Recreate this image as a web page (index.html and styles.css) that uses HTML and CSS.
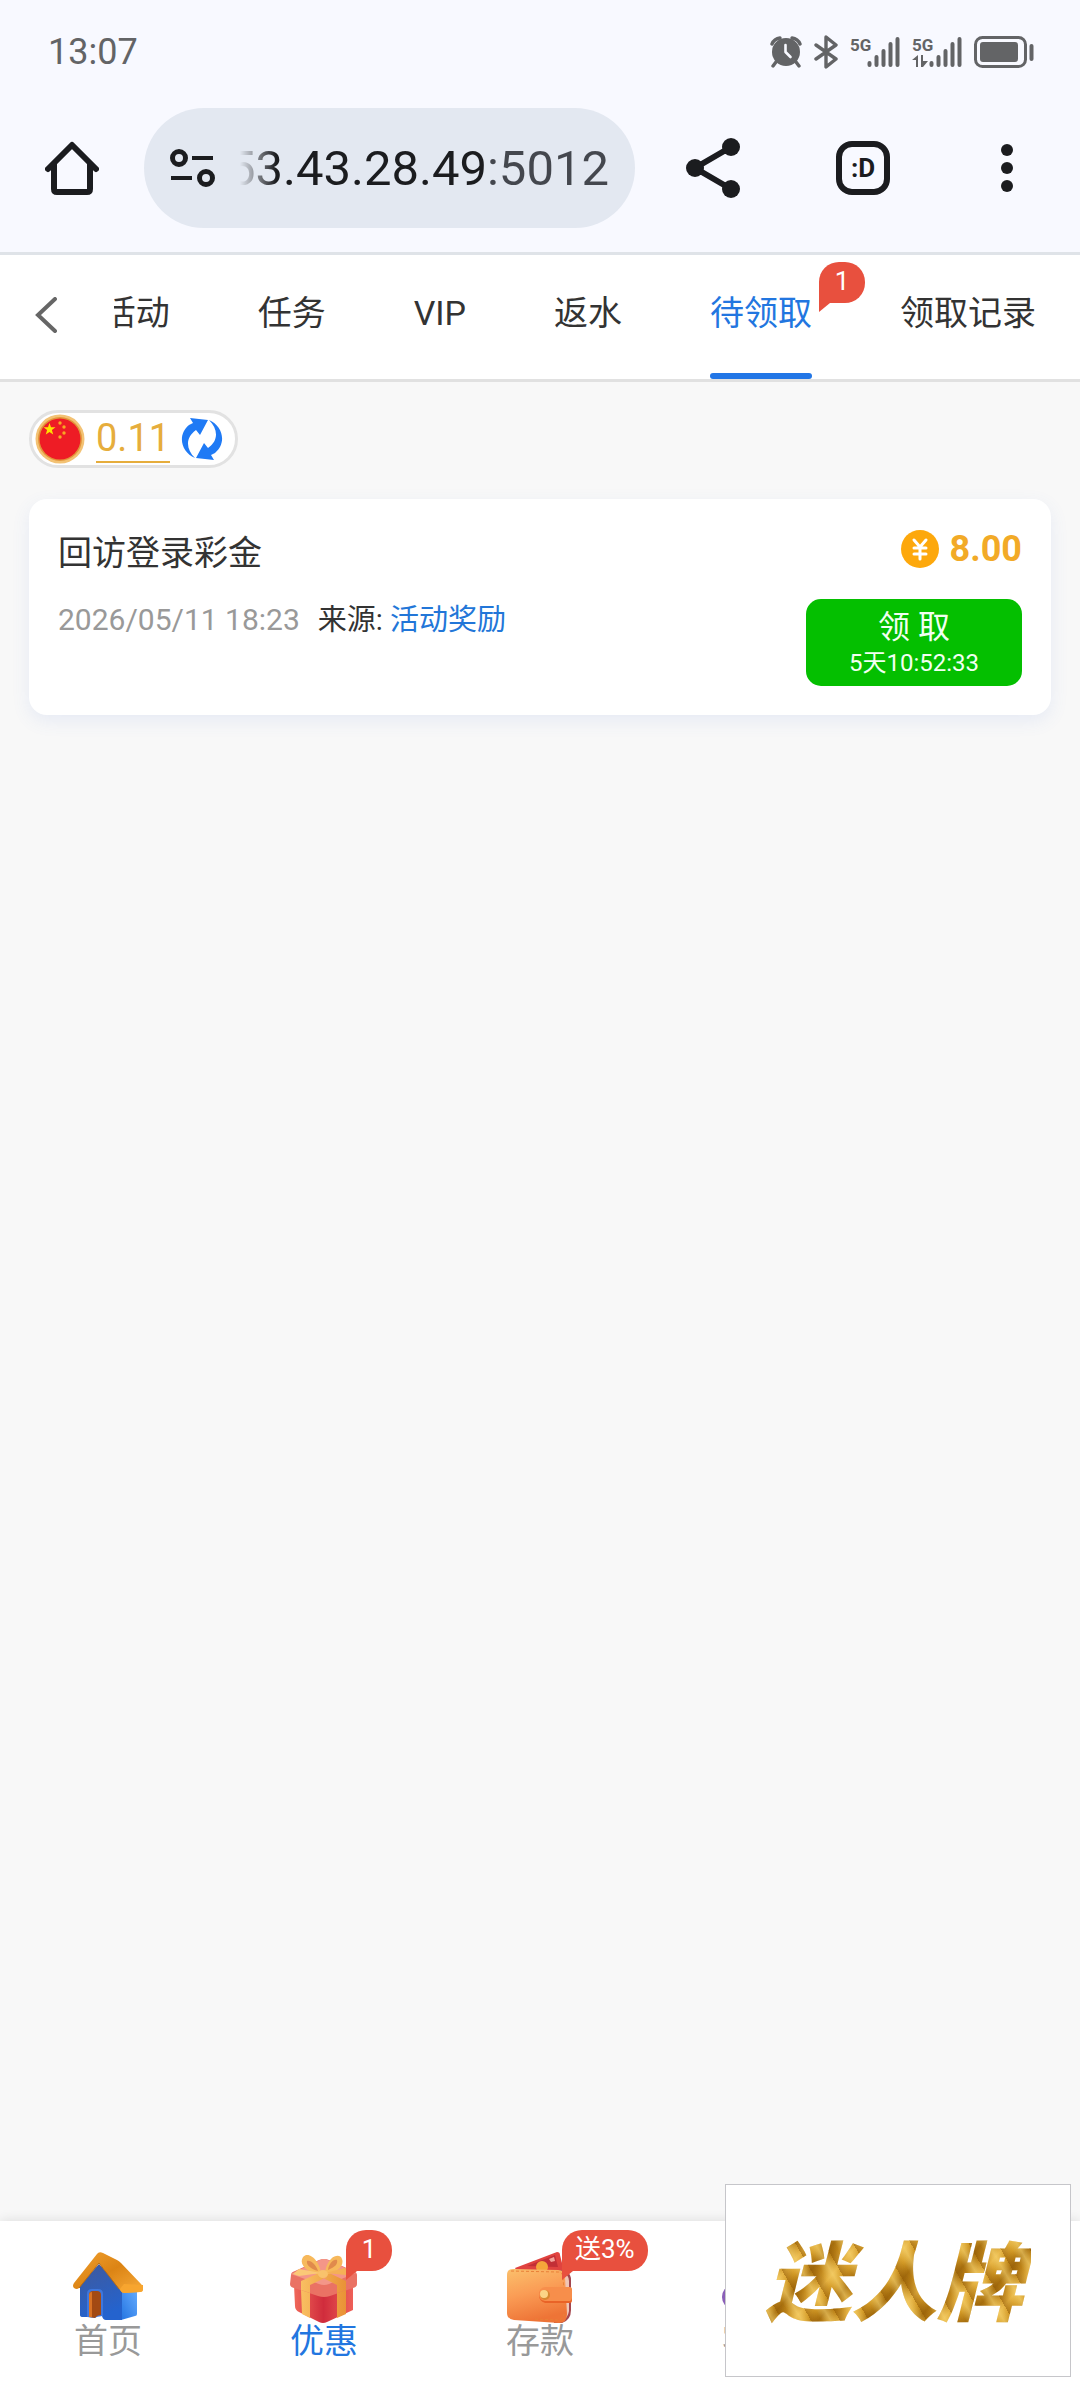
FILE: index.html
```html
<!DOCTYPE html>
<html lang="zh-CN">
<head>
    <meta charset="UTF-8">
    <meta name="viewport" content="width=device-width, initial-scale=1.0">
    <title>待领取</title>
    <link rel="stylesheet" href="styles.css">
</head>
<body>

<!-- Phone status bar -->
<div class="status-bar">
    <span class="clock">13:07</span>
    <div class="status-icons">
        <svg class="alarm" width="32" height="34" viewBox="0 0 32 34">
            <circle cx="16" cy="17" r="14" fill="#636466"/>
            <path d="M2 9a10 10 0 0 1 8-6M30 9a10 10 0 0 0-8-6M6 27l-3 4M26 27l3 4" fill="none" stroke="#636466" stroke-width="3.4" stroke-linecap="round"/>
            <path d="M15.500 10v7l5 5" fill="none" stroke="#f8f9ff" stroke-width="2.600" stroke-linecap="round" stroke-linejoin="round"/>
        </svg>
        <svg class="bluetooth" width="24" height="34" viewBox="0 0 24 34">
            <path d="M2 10l20 14-10 8V2l10 8L2 24" fill="none" stroke="#636466" stroke-width="3.4" stroke-linejoin="round" stroke-linecap="round"/>
        </svg>
        <svg class="signal" width="50" height="34" viewBox="0 0 50 34">
            <text x="0" y="16" class="net">5G</text>
            <path d="M19.500 28v2M26.500 22v8M33.500 16v14M40.500 9v21M47.500 4v26" stroke="#636466" stroke-width="4" stroke-linecap="round"/>
        </svg>
        <svg class="signal" width="50" height="34" viewBox="0 0 50 34">
            <text x="0" y="16" class="net">5G</text>
            <path d="M19.500 28v2M26.500 22v8M33.500 16v14M40.500 9v21M47.500 4v26" stroke="#636466" stroke-width="4" stroke-linecap="round"/>
            <path d="M0 25l6-5v12H4v-7zM9 20h2v6h5l-5 6H9z" fill="#636466"/>
        </svg>
        <svg class="battery" width="60" height="34" viewBox="0 0 60 34">
            <rect x="1.500" y="2.500" width="50" height="29" rx="7" fill="none" stroke="#636466" stroke-width="3"/>
            <rect x="6" y="7" width="38" height="20" rx="3" fill="#636466"/>
            <rect x="55.500" y="9" width="4" height="17" rx="2" fill="#636466"/>
        </svg>
    </div>
</div>

<!-- Browser toolbar -->
<div class="toolbar">
    <button type="button" class="icon-btn" aria-label="主页">
        <svg width="54" height="54" viewBox="0 0 54 54">
            <path d="M3 28L27 4l24 24" fill="none" stroke="#1b1c1f" stroke-width="6" stroke-linecap="round" stroke-linejoin="round"/>
            <path d="M9 23v25q0 3 3 3h30q3 0 3-3V23" fill="none" stroke="#1b1c1f" stroke-width="6"/>
        </svg>
    </button>
    <div class="address">
        <svg width="46" height="40" viewBox="0 0 46 40">
            <g fill="none" stroke="#1b1c1f">
                <circle cx="9" cy="10" r="6.500" stroke-width="5"/>
                <circle cx="36" cy="30" r="6.500" stroke-width="5"/>
                <path d="M22 10h21M1 30h21" stroke-width="4"/>
            </g>
        </svg>
        <div class="url-wrap">
            <input type="text" class="url" value="53.43.28.49:5012" aria-label="网址">
        </div>
    </div>
    <div class="toolbar-actions">
        <button type="button" class="icon-btn" aria-label="分享">
            <svg width="54" height="60" viewBox="0 0 54 60">
                <path d="M45 9L9 30l36 21" fill="none" stroke="#1b1c1f" stroke-width="6"/>
                <g fill="#1b1c1f">
                    <circle cx="45" cy="9" r="9"/>
                    <circle cx="9" cy="30" r="9"/>
                    <circle cx="45" cy="51" r="9"/>
                </g>
            </svg>
        </button>
        <button type="button" class="icon-btn tab-count">:D</button>
        <button type="button" class="icon-btn" aria-label="更多">
            <svg width="54" height="54" viewBox="0 0 54 54" fill="#1b1c1f">
                <circle cx="27" cy="9" r="6"/>
                <circle cx="27" cy="27" r="6"/>
                <circle cx="27" cy="45" r="6"/>
            </svg>
        </button>
    </div>
</div>

<!-- Page tabs -->
<nav class="tab-bar">
    <button type="button" class="icon-btn back" aria-label="返回">
        <svg width="22" height="36" viewBox="0 0 22 36">
            <path d="M20 2L3 18l17 16" fill="none" stroke="#666666" stroke-width="4" stroke-linecap="round"/>
        </svg>
    </button>
    <div class="tabs">
        <a href="#" class="tab">活动</a>
        <a href="#" class="tab">任务</a>
        <a href="#" class="tab">VIP</a>
        <a href="#" class="tab">返水</a>
        <a href="#" class="tab active">待领取<span class="badge">1</span></a>
        <a href="#" class="tab">领取记录</a>
    </div>
</nav>

<main class="content">
    <div class="balance">
        <svg width="50" height="50" viewBox="0 0 50 50">
            <circle cx="25" cy="25" r="24.500" fill="#f3c274"/>
            <circle cx="25" cy="25" r="22" fill="#e2953a"/>
            <circle cx="25" cy="25" r="20.500" fill="#ee1c25"/>
            <path d="M14.500 9l1.500 4.200 4.500.1-3.600 2.800 1.300 4.400-3.700-2.600-3.700 2.600 1.300-4.400L8.500 13.300l4.500-.1z" fill="#ffe100"/>
            <g fill="#f7a823">
                <circle cx="25" cy="9" r="1.700"/>
                <circle cx="29" cy="13" r="1.700"/>
                <circle cx="29" cy="19" r="1.700"/>
                <circle cx="25" cy="23" r="1.700"/>
            </g>
        </svg>
        <a href="#" class="balance-value">0.11</a>
        <button type="button" class="icon-btn" aria-label="刷新">
            <svg width="42" height="44" viewBox="0 0 42 44" fill="#1f7af5">
                <path d="M9 1l18 2-8 15-4-5C4 21 5 32 14 41 0 35-4 18 8 8l4-2z"/>
                <path d="M33 43l-18-2 8-15 4 5C38 23 37 12 28 3c14 6 18 23 6 33l-4 2z"/>
            </svg>
        </button>
    </div>

    <section class="bonus-card">
        <div class="bonus-info">
            <h2>回访登录彩金</h2>
            <div class="bonus-meta">
                <span class="date">2026/05/11 18:23</span>
                <span class="source">来源: <a href="#">活动奖励</a></span>
            </div>
        </div>
        <div class="bonus-side">
            <div class="amount">
                <svg width="38" height="38" viewBox="0 0 38 38">
                    <circle cx="19" cy="19" r="19" fill="#fda80c"/>
                    <path d="M13 10l6 7 6-7M19 17v12M13 18h12M13 24h12" fill="none" stroke="#ffffff" stroke-width="3" stroke-linecap="round"/>
                </svg>
                <span>8.00</span>
            </div>
            <button type="button" class="claim-btn">
                <span class="claim-label">领 取</span>
                <span class="countdown">5天10:52:33</span>
            </button>
        </div>
    </section>
</main>

<!-- Bottom navigation -->
<nav class="bottom-nav">
    <a href="#" class="nav-item">
        <span class="nav-icon">
            <svg width="70" height="72" viewBox="0 0 70 72">
                <defs>
                    <linearGradient id="roof" x1="0" y1="0" x2="1" y2="1">
                        <stop offset="0" stop-color="#f0a030"/>
                        <stop offset="0.500" stop-color="#dc8414"/>
                        <stop offset="1" stop-color="#f8ac3c"/>
                    </linearGradient>
                    <linearGradient id="wall" x1="0" y1="0" x2="0.300" y2="1">
                        <stop offset="0" stop-color="#40599c"/>
                        <stop offset="1" stop-color="#2463ce"/>
                    </linearGradient>
                    <linearGradient id="side" x1="0" y1="1" x2="1" y2="0">
                        <stop offset="0" stop-color="#2474e0"/>
                        <stop offset="1" stop-color="#64acff"/>
                    </linearGradient>
                </defs>
                <path d="M48 38h16v25q0 2-2 2l-14 4z" fill="url(#side)"/>
                <path d="M26 13L7 34v30q0 2 3 2h7l12-1q1 4 4 4h16V38z" fill="url(#wall)"/>
                <path d="M14 66V43q0-5 5-5h6q5 0 5 5v22q-6 0-8 2z" fill="#3e77de"/>
                <path d="M16 66V44q0-4 4-4h4q4 0 4 4v20q-4 0-6 3z" fill="#a34a13"/>
                <path d="M16 66V44q0-3 3-3v25z" fill="#d97324"/>
                <path d="M24 3q2-3 6-1l14 7q2 1 4 3l20 21q2 2 2 5 0 3-3 3l-16 1q-2 0-4-3L26 12 6 37q-2 2-5 0-2-2 0-5z" fill="url(#roof)"/>
                <path d="M51 42q-3 0-4-4l4-5 19 1v4q0 3-3 3z" fill="#f7a52f"/>
                <path d="M6 37L26 12l20 26" fill="none" stroke="#b96b12" stroke-width="1"/>
            </svg>
        </span>
        <span class="nav-label">首页</span>
    </a>
    <a href="#" class="nav-item active">
        <span class="nav-icon">
            <svg width="70" height="72" viewBox="0 0 70 72">
                <defs>
                    <linearGradient id="box" x1="0" y1="0" x2="1" y2="0">
                        <stop offset="0" stop-color="#f0685a"/>
                        <stop offset="0.500" stop-color="#d02c3c"/>
                        <stop offset="1" stop-color="#ee6058"/>
                    </linearGradient>
                    <linearGradient id="ribbon" x1="0" y1="0" x2="1" y2="0">
                        <stop offset="0" stop-color="#f9bf62"/>
                        <stop offset="1" stop-color="#e99236"/>
                    </linearGradient>
                </defs>
                <path d="M5 34h59v25L38 71q-4 2-8 0L10 61q-4-2-4-6z" fill="url(#box)"/>
                <path d="M2 24q0-3 4-4L30 9q5-2 10 0l24 11q4 1 4 4v9q0 3-4 4L41 45q-6 2-12 0L5 37q-4-1-4-4z" fill="#ea7264"/>
                <path d="M2 23L31 9q4-2 8 0l28 13-27 11q-5 2-10 0z" fill="#f49688"/>
                <path d="M12 39l9 3v25l-8-4zM48 42l9-3v24l-9 4z" fill="url(#ribbon)"/>
                <path d="M12 39V30l20-9 6 5-17 8v8zM57 39V30L38 21l-6 5 16 8v8z" fill="url(#ribbon)"/>
                <path d="M32 24C19 22 9 14 14 6c6-7 18 5 18 18zM36 24c13-3 21-10 16-18-7-5-16 6-16 18z" fill="#f7b95c"/>
                <path d="M29 20c-7-2-12-6-11-10 4-1 9 4 11 10zM39 19c7-3 10-6 9-10-4-1-8 4-9 10z" fill="#e08a4c"/>
                <path d="M32 22L10 18l-6 5 6 2z" fill="#fbc877"/>
                <path d="M36 22l20-5 6 5-5 2z" fill="#f5b056"/>
                <ellipse cx="34" cy="23" rx="5" ry="4" fill="#f9c26c"/>
            </svg>
            <span class="badge">1</span>
        </span>
        <span class="nav-label">优惠</span>
    </a>
    <a href="#" class="nav-item">
        <span class="nav-icon">
            <svg width="70" height="72" viewBox="0 0 70 72">
                <defs>
                    <linearGradient id="leather" x1="0" y1="0" x2="0.300" y2="1">
                        <stop offset="0" stop-color="#fbc06c"/>
                        <stop offset="0.500" stop-color="#fa9c55"/>
                        <stop offset="1" stop-color="#ee7436"/>
                    </linearGradient>
                </defs>
                <path d="M10 17L52 1q3 0 3 3l5 20H14z" fill="#e0433f"/>
                <path d="M22 15l28-11 3 12z" fill="#c22f36"/>
                <path d="M44 8l5-2 1 4-4 1z" fill="#f3a49c"/>
                <path d="M54 19q12 0 12 10v30q0 10-9 13h-8z" fill="#a4464e"/>
                <path d="M58 22q6 2 6 8v30q-1 6-6 10z" fill="#f0c6b6"/>
                <circle cx="37" cy="16" r="6" fill="#f5a63a"/>
                <path d="M2 24q0-6 6-6l45 1q7 0 7 7l2 37q0 9-8 9L9 69q-7-1-7-7z" fill="url(#leather)"/>
                <path d="M6 20l47 1q5 0 5 6l1 12M30 68l22 1q6 0 7-6" fill="none" stroke="#e98038" stroke-width="1" stroke-dasharray="3 2"/>
                <path d="M40 37h25q2 0 2 3v9q0 3-2 3H40q-6-2-6-8 0-6 6-7z" fill="#e96327"/>
                <path d="M40 36h25q2 0 2 3v8q0 2-2 3H40q-6-1-6-7 0-6 6-7z" fill="#f78e4b"/>
                <circle cx="40" cy="44" r="5" fill="#d8872f"/>
                <circle cx="39" cy="43" r="4" fill="#fbd486"/>
            </svg>
            <span class="badge">送3%</span>
        </span>
        <span class="nav-label">存款</span>
    </a>
    <a href="#" class="nav-item">
        <span class="nav-icon">
            <svg width="70" height="72" viewBox="0 0 70 72">
                <path d="M10 40a25 25 0 0 1 50 0" fill="none" stroke="#8d62c4" stroke-width="6"/>
                <ellipse cx="10" cy="46" rx="9" ry="11" fill="#8a5fb8"/>
                <ellipse cx="60" cy="46" rx="9" ry="11" fill="#8a5fb8"/>
            </svg>
        </span>
        <span class="nav-label">客服</span>
    </a>
</nav>

<!-- Floating ad -->
<a href="#" class="float-ad"><span class="ad-text">迷人牌</span></a>

</body>
</html>
```
FILE: styles.css
```css
* {
    box-sizing: border-box;
}

body {
    margin: 0;
    min-height: 100vh;
    display: flex;
    flex-direction: column;
    font-family: Roboto, "Noto Sans CJK SC", sans-serif;
    font-size: 34px;
    color: #333333;
    background-color: #f8f8f8;
}

a {
    color: inherit;
    text-decoration: none;
}

svg {
    display: block;
    flex-shrink: 0;
}

.icon-btn {
    display: flex;
    align-items: center;
    justify-content: center;
    padding: 0;
    border: none;
    background: none;
    cursor: pointer;
}

/* Status bar */
.status-bar {
    display: flex;
    align-items: center;
    justify-content: space-between;
    height: 104px;
    padding: 0 46px 0 48px;
    background-color: #f8f9ff;
}

.clock {
    font-size: 36px;
    color: #636466;
}

.status-icons {
    display: flex;
    align-items: center;
    gap: 12px;
}

.net {
    font-size: 17px;
    font-weight: 700;
    fill: #636466;
}

/* Browser toolbar */
.toolbar {
    display: flex;
    align-items: center;
    height: 151px;
    padding: 4px 46px 24px 45px;
    border-bottom: 3px solid #dfe3e8;
    background-color: #f8f9ff;
}

.address {
    flex: 1;
    display: flex;
    align-items: center;
    gap: 24px;
    min-width: 0;
    height: 120px;
    margin: 0 51px 0 45px;
    padding: 0 26px;
    border-radius: 60px;
    background-color: #e3e8f1;
}

/* Keeps the end of a long address in view and fades its start */
.url-wrap {
    flex: 1;
    display: flex;
    justify-content: flex-end;
    min-width: 0;
    overflow: hidden;
    -webkit-mask-image: linear-gradient(to right, transparent, #000000 36px);
    mask-image: linear-gradient(to right, transparent, #000000 36px);
}

.url {
    flex-shrink: 0;
    width: 420px;
    padding: 0;
    border: none;
    outline: none;
    font-family: Roboto, sans-serif;
    font-size: 49px;
    text-align: right;
    color: transparent;
    background: linear-gradient(to right, #1b1c1f calc(100% - 123px), #44474e calc(100% - 123px));
    -webkit-background-clip: text;
    background-clip: text;
}

.toolbar-actions {
    display: flex;
    align-items: center;
    gap: 90px;
}

.toolbar-actions .icon-btn:first-child {
    margin-right: 6px;
}

.tab-count {
    width: 54px;
    height: 54px;
    border: 6px solid #1b1c1f;
    border-radius: 16px;
    font-family: Roboto, sans-serif;
    font-size: 26px;
    font-weight: 700;
    color: #1b1c1f;
}

/* Page tabs */
.tab-bar {
    display: flex;
    height: 127px;
    border-bottom: 3px solid #e1e1e1;
    background-color: #ffffff;
}

.back {
    padding: 0 57px 4px 35px;
}

.tabs {
    flex: 1;
    display: flex;
    justify-content: flex-end;
    overflow: hidden;
}

.tab {
    position: relative;
    flex-shrink: 0;
    padding: 0 44px;
    line-height: 116px;
}

.tab.active {
    color: #2276e0;
}

.tab.active::after {
    content: "";
    display: block;
    height: 6px;
    margin-top: 2px;
    border-radius: 3px;
    background-color: #2276e6;
}

/* Red bubble, shared by the tabs and the bottom navigation */
.badge {
    position: absolute;
    min-width: 46px;
    height: 41px;
    padding: 0 13px;
    border-radius: 20px 20px 20px 0;
    font-size: 26px;
    line-height: 38px;
    text-align: center;
    white-space: nowrap;
    color: #ffffff;
    background-color: #e8503e;
}

.badge::after {
    content: "";
    position: absolute;
    left: 0;
    top: 100%;
    width: 11px;
    height: 9px;
    background-color: #e8503e;
    clip-path: polygon(0 0, 100% 0, 0 100%);
}

.tab .badge {
    top: 7px;
    right: -9px;
}

/* Content */
.content {
    flex: 1;
    padding: 28px 29px;
}

.balance {
    display: flex;
    align-items: center;
    gap: 11px;
    width: fit-content;
    height: 58px;
    padding: 0 12px 0 3px;
    border: 3px solid #e2e2e2;
    border-radius: 29px;
    background-color: #ffffff;
}

.balance-value {
    border-bottom: 2px solid #e6ad3c;
    font-size: 38px;
    line-height: 46px;
    color: #e6ad3c;
}

.bonus-card {
    display: flex;
    justify-content: space-between;
    margin-top: 31px;
    padding: 29px;
    border-radius: 18px;
    background-color: #ffffff;
    box-shadow: 0 6px 18px rgba(80, 120, 220, 0.1);
}

.bonus-info h2 {
    margin: 0;
    font-size: 34px;
    font-weight: 400;
    line-height: 50px;
}

.bonus-meta {
    display: flex;
    align-items: center;
    gap: 18px;
    margin-top: 17px;
    font-size: 29px;
    line-height: 50px;
}

.date {
    font-size: 30px;
    color: #999999;
}

.source a {
    color: #2276d8;
}

.bonus-side {
    display: flex;
    flex-direction: column;
    align-items: flex-end;
}

.amount {
    display: flex;
    align-items: center;
    gap: 11px;
    height: 42px;
    font-size: 36px;
    font-weight: 700;
    color: #f2aa27;
}

.claim-btn {
    display: flex;
    flex-direction: column;
    align-items: center;
    width: 216px;
    margin-top: 29px;
    padding: 8px 0 7px;
    border: none;
    border-radius: 15px;
    font-family: inherit;
    color: #f2fff2;
    background-color: #04bf00;
    cursor: pointer;
}

.claim-label {
    font-size: 32px;
    line-height: 40px;
}

.countdown {
    font-size: 24px;
    line-height: 32px;
}

/* Bottom navigation */
.bottom-nav {
    display: flex;
    height: 179px;
    padding-top: 30px;
    background-color: #ffffff;
    box-shadow: 0 0 12px rgba(0, 0, 0, 0.12);
}

.nav-item {
    flex: 0 0 20%;
    display: flex;
    flex-direction: column;
    align-items: center;
    color: #999999;
}

.nav-item.active {
    color: #2276e0;
}

.nav-icon {
    position: relative;
}

.nav-icon .badge {
    top: -21px;
    left: 57px;
}

.nav-label {
    line-height: 36px;
}

/* Floating ad */
.float-ad {
    position: fixed;
    right: 9px;
    bottom: 23px;
    display: flex;
    align-items: center;
    justify-content: center;
    width: 346px;
    height: 193px;
    padding: 0 8px 8px 0;
    border: 1px solid #c6c6ca;
    background-color: #ffffff;
}

.ad-text {
    padding: 0 8px;
    font-family: "Noto Sans CJK SC", sans-serif;
    font-size: 86px;
    font-style: italic;
    font-weight: 900;
    line-height: 100px;
    color: transparent;
    background:
        repeating-linear-gradient(60deg, rgba(140, 85, 5, 0.5) 0, transparent 9px, rgba(255, 225, 130, 0.5) 17px, transparent 25px),
        repeating-linear-gradient(130deg, #bd8318 0, #e6b343 12px, #d39a26 21px, #a8700f 31px, #bd8318 38px);
    -webkit-background-clip: text;
    background-clip: text;
}
```
